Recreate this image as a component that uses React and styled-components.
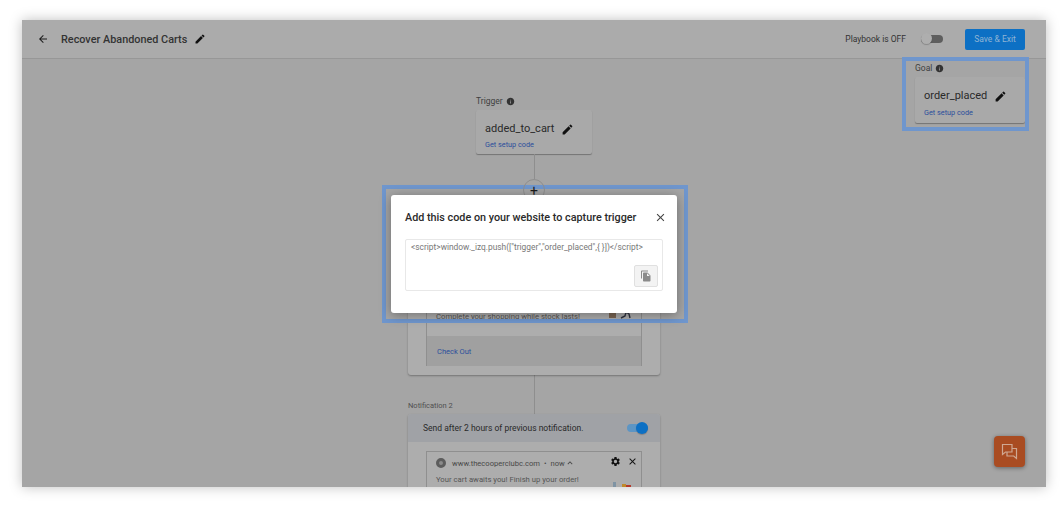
import styled, { createGlobalStyle } from "styled-components";
import { MdArrowBack, MdEdit, MdInfo, MdClose, MdFileCopy, MdSettings, MdExpandLess } from "react-icons/md";

const GlobalStyle = createGlobalStyle`
  html, body {
    margin: 0;
    background: #fff;
    font-family: Roboto, "Liberation Sans", sans-serif;
    color: #2b2b2b;
  }
`;

const Page = styled.div`
  height: 509px;
  box-sizing: border-box;
  padding: 20px 15px 22px 22px;
  overflow: hidden;
  position: relative;
`;

const Frame = styled.div`
  position: relative;
  height: 100%;
  display: flex;
  flex-direction: column;
  overflow: hidden;
  background: #a5a5a5;
`;

const FrameShadow = styled.div`
  height: 467px;
  box-shadow: 0 0 12px rgba(0, 0, 0, 0.25);
`;

/* Header */

const Header = styled.header`
  flex: none;
  height: 38px;
  display: flex;
  align-items: center;
  padding: 0 21px 0 15px;
  background: #ababab;
  border-bottom: 1px solid #979797;
`;

const Title = styled.span`
  margin-left: 12px;
  font-size: 10.85px;
  font-weight: 500;
  color: #333;
`;

const TitlePencil = styled(MdEdit)`
  margin-left: 7px;
  color: #111;
`;

const PlaybookLabel = styled.span`
  margin-left: auto;
  font-size: 8.5px;
  color: #333;
`;

const SaveButton = styled.button`
  height: 21px;
  width: 60px;
  margin-left: 22px;
  padding: 0;
  border: 0;
  border-radius: 2px;
  background: #0d70c4;
  color: #8fb4d4;
  font: 400 8.5px Roboto, sans-serif;
`;

const Track = styled.span`
  position: relative;
  display: block;
  width: ${(p) => (p.$on ? "21px" : "22px")};
  height: 8px;
  margin-left: 15px;
  border-radius: 4px;
  background: ${(p) => (p.$on ? "#5d95c4" : "#5e5e5e")};
`;

const Knob = styled.span`
  position: absolute;
  top: -2px;
  left: ${(p) => (p.$on ? "9px" : "0")};
  width: ${(p) => (p.$on ? "12px" : "11px")};
  height: ${(p) => (p.$on ? "12px" : "11px")};
  border-radius: 50%;
  background: ${(p) => (p.$on ? "#0d70c4" : "#aeaeae")};
  box-shadow: 0 1px 1px rgba(0, 0, 0, 0.2);
`;

/* Canvas */

const Canvas = styled.main`
  position: relative;
  flex: 1;
  min-height: 0;
  display: flex;
  flex-direction: column;
  align-items: center;
  padding-top: 35px;
`;

const StepBlock = styled.div`
  width: 116px;
`;

const StepLabel = styled.div`
  display: flex;
  align-items: center;
  gap: 3px;
  height: 14px;
  margin-bottom: 2px;
  font-size: 8.5px;
  color: #3f3f3f;
  svg {
    width: 9px;
    height: 9px;
    color: #333;
  }
`;

const StepCard = styled.div`
  height: 44px;
  box-sizing: border-box;
  padding: 12px 9px 0;
  background: #a9a9a9;
  border-radius: 2px;
  box-shadow: 0 1px 1px rgba(0, 0, 0, 0.3);
`;

const StepName = styled.div`
  display: flex;
  align-items: center;
  gap: 7px;
  font-size: 11px;
  line-height: 14px;
  color: #2a2a2a;
  svg {
    width: 13px;
    height: 13px;
    color: #111;
  }
`;

const SetupLink = styled.div`
  margin-top: 4px;
  font-size: 7.3px;
  color: #2c4f9c;
`;

const GoalBlock = styled(StepBlock)`
  position: absolute;
  top: 2px;
  right: 21px;
  width: 110px;

  ${StepCard} {
    height: 46px;
  }

  ${SetupLink} {
    margin-top: 5px;
  }
`;

const Connector = styled.div`
  flex: none;
  width: 1px;
  height: ${(p) => p.$height}px;
  background: #8e8e8e;
`;

const AddButton = styled.div`
  flex: none;
  position: relative;
  z-index: 1;
  width: 22px;
  height: 22px;
  box-sizing: border-box;
  display: flex;
  align-items: center;
  justify-content: center;
  padding-top: 2px;
  border: 1px solid #8e8e8e;
  border-radius: 50%;
  font-size: 14px;
  line-height: 1;
  color: #1c1c1c;
`;

/* Notifications */

const Notification = styled.section`
  flex: none;
  position: relative;
  width: 252px;
  border-radius: 3px;
  background: #adadad;
  box-shadow: 0 1px 2px rgba(0, 0, 0, 0.3);
`;

const NotificationLabel = styled.div`
  position: absolute;
  left: 0;
  top: -13px;
  font-size: 7.5px;
  color: #505050;
`;

const NotificationHead = styled.div`
  height: 28px;
  display: flex;
  align-items: center;
  justify-content: space-between;
  padding: 0 12px 0 15px;
  background: #a0a2a6;
  border-radius: 3px 3px 0 0;
  font-size: 8.5px;
  color: #2a2a2a;
`;

const NotificationBody = styled.div`
  padding: 9px 18px;
`;

const Preview = styled.div`
  border: 1px solid #8f8f8f;
  border-bottom: 0;
  background: #adadad;
`;

const PreviewMain = styled.div`
  position: relative;
  height: ${(p) => p.$height}px;
  box-sizing: border-box;
  padding: ${(p) => p.$top}px 9px 0;
`;

const BrowserRow = styled.div`
  display: flex;
  align-items: center;
  height: 14px;
  font-size: 7.6px;
  color: #484848;
`;

const ChromeDot = styled.span`
  width: 10px;
  height: 10px;
  margin-right: 6px;
  box-sizing: border-box;
  border-radius: 50%;
  border: 3px solid #5c5c5c;
  background: #8a8a8a;
`;

const Separator = styled.span`
  margin: 0 4px;
`;

const PreviewTools = styled.div`
  position: absolute;
  top: 4px;
  right: 3px;
  display: flex;
  gap: 6px;
  color: #111;
  svg {
    width: 11px;
    height: 11px;
  }
`;

const Message = styled.div`
  margin-top: 5px;
  font-size: 7.7px;
  color: #555;
`;

const PreviewArt = styled.svg`
  position: absolute;
  right: 10px;
  top: ${(p) => p.$top}px;
`;

const ActionRow = styled.div`
  height: 30px;
  display: flex;
  align-items: center;
  padding: 0 10px;
  background: #a0a0a0;
  font-size: 7.5px;
  color: #2c4f9c;
`;

/* Floating chat */

const ChatButton = styled.div`
  position: absolute;
  right: 21px;
  bottom: 20px;
  width: 31px;
  height: 31px;
  display: flex;
  align-items: center;
  justify-content: center;
  border-radius: 4px;
  background: #a94c22;
  box-shadow: 0 1px 4px rgba(0, 0, 0, 0.4);
`;

/* Modal and tour highlights */

const Highlight = styled.div`
  position: absolute;
  left: ${(p) => p.$x}px;
  top: ${(p) => p.$y}px;
  width: ${(p) => p.$w}px;
  height: ${(p) => p.$h}px;
  box-sizing: border-box;
  border: 4px solid #6f96cd;
`;

const Modal = styled.div`
  position: absolute;
  z-index: 2;
  left: 391px;
  top: 195px;
  width: 286px;
  height: 118px;
  box-sizing: border-box;
  padding: 15px 14px 0;
  background: #fff;
  border-radius: 3px;
  box-shadow: 0 2px 12px rgba(0, 0, 0, 0.35);
`;

const ModalHead = styled.div`
  display: flex;
  align-items: center;
  justify-content: space-between;
  height: 15px;
  font-size: 10.8px;
  font-weight: 500;
  color: #2a2a2a;
  svg {
    width: 13px;
    height: 13px;
    margin-right: -4px;
    color: #444;
  }
`;

const CodeBox = styled.div`
  position: relative;
  margin-top: 14px;
  height: 52px;
  box-sizing: border-box;
  padding: 2px 5px;
  border: 1px solid #e8e8e8;
  border-radius: 2px;
  font-size: 8.4px;
  color: #777;
`;

const CopyButton = styled.div`
  position: absolute;
  right: 4px;
  bottom: 3px;
  width: 24px;
  height: 22px;
  box-sizing: border-box;
  display: flex;
  align-items: center;
  justify-content: center;
  background: #f3f3f3;
  border: 1px solid #e0e0e0;
  border-radius: 2px;
  color: #8a8a8a;
  svg {
    width: 12px;
    height: 12px;
  }
`;

function Step({ label, name }) {
  return (
    <>
      <StepLabel>
        {label} <MdInfo />
      </StepLabel>
      <StepCard>
        <StepName>
          {name} <MdEdit />
        </StepName>
        <SetupLink>Get setup code</SetupLink>
      </StepCard>
    </>
  );
}

function ChatIcon() {
  return (
    <svg width="17" height="17" viewBox="0 0 17 17" fill="none" stroke="#cfa893" strokeWidth="1.2">
      <path d="M1.5 1.5h9.5v7.5H4.5l-3 2.5z" />
      <path d="M11 5.5h4.5v10l-2.8-2.5H6V9" />
    </svg>
  );
}

export default function App() {
  return (
    <>
      <GlobalStyle />
      <Page>
        <FrameShadow>
          <Frame>
            <Header>
              <MdArrowBack size={12} color="#1c1c1c" />
              <Title>Recover Abandoned Carts</Title>
              <TitlePencil size={12} />
              <PlaybookLabel>Playbook is OFF</PlaybookLabel>
              <Track>
                <Knob />
              </Track>
              <SaveButton>Save &amp; Exit</SaveButton>
            </Header>
            <Canvas>
              <StepBlock>
                <Step label="Trigger" name="added_to_cart" />
              </StepBlock>
              <GoalBlock>
                <Step label="Goal" name="order_placed" />
              </GoalBlock>
              <Connector $height={25} />
              <AddButton>+</AddButton>
              <Connector $height={48} />
              <Notification>
                <NotificationHead />
                <NotificationBody>
                  <Preview>
                    <PreviewMain $height={49} $top={20}>
                      <Message>Complete your shopping while stock lasts!</Message>
                      <PreviewArt $top={24} width="22" height="8" viewBox="0 0 22 8">
                        <rect x="0" y="1" width="7" height="6" fill="#7a6553" />
                        <path d="M12 7l4-2 1-4 3 2 1 4" fill="none" stroke="#2f3340" strokeWidth="1.4" />
                      </PreviewArt>
                    </PreviewMain>
                    <ActionRow>Check Out</ActionRow>
                  </Preview>
                </NotificationBody>
              </Notification>
              <Connector $height={39} />
              <Notification>
                <NotificationLabel>Notification 2</NotificationLabel>
                <NotificationHead>
                  Send after 2 hours of previous notification.
                  <Track $on>
                    <Knob $on />
                  </Track>
                </NotificationHead>
                <NotificationBody>
                  <Preview>
                    <PreviewMain $height={60} $top={4}>
                      <BrowserRow>
                        <ChromeDot />
                        www.thecooperclubc.com
                        <Separator>•</Separator>
                        now
                        <MdExpandLess size={10} />
                      </BrowserRow>
                      <PreviewTools>
                        <MdSettings />
                        <MdClose />
                      </PreviewTools>
                      <Message>Your cart awaits you! Finish up your order!</Message>
                      <PreviewArt $top={30} width="18" height="6" viewBox="0 0 18 6">
                        <rect x="0" y="0" width="3" height="6" fill="#7f93a3" />
                        <rect x="9" y="2" width="4" height="4" fill="#c08a2c" />
                        <rect x="13" y="3" width="5" height="3" fill="#b5392b" />
                      </PreviewArt>
                    </PreviewMain>
                  </Preview>
                </NotificationBody>
              </Notification>
            </Canvas>
            <ChatButton>
              <ChatIcon />
            </ChatButton>
          </Frame>
        </FrameShadow>
        <Highlight $x={902} $y={57} $w={127} $h={74} />
        <Highlight $x={382} $y={185} $w={306} $h={138} />
        <Modal>
          <ModalHead>
            Add this code on your website to capture trigger
            <MdClose />
          </ModalHead>
          <CodeBox>
            {'<script>window._izq.push(["trigger","order_placed",{ }])</script>'}
            <CopyButton>
              <MdFileCopy />
            </CopyButton>
          </CodeBox>
        </Modal>
      </Page>
    </>
  );
}
